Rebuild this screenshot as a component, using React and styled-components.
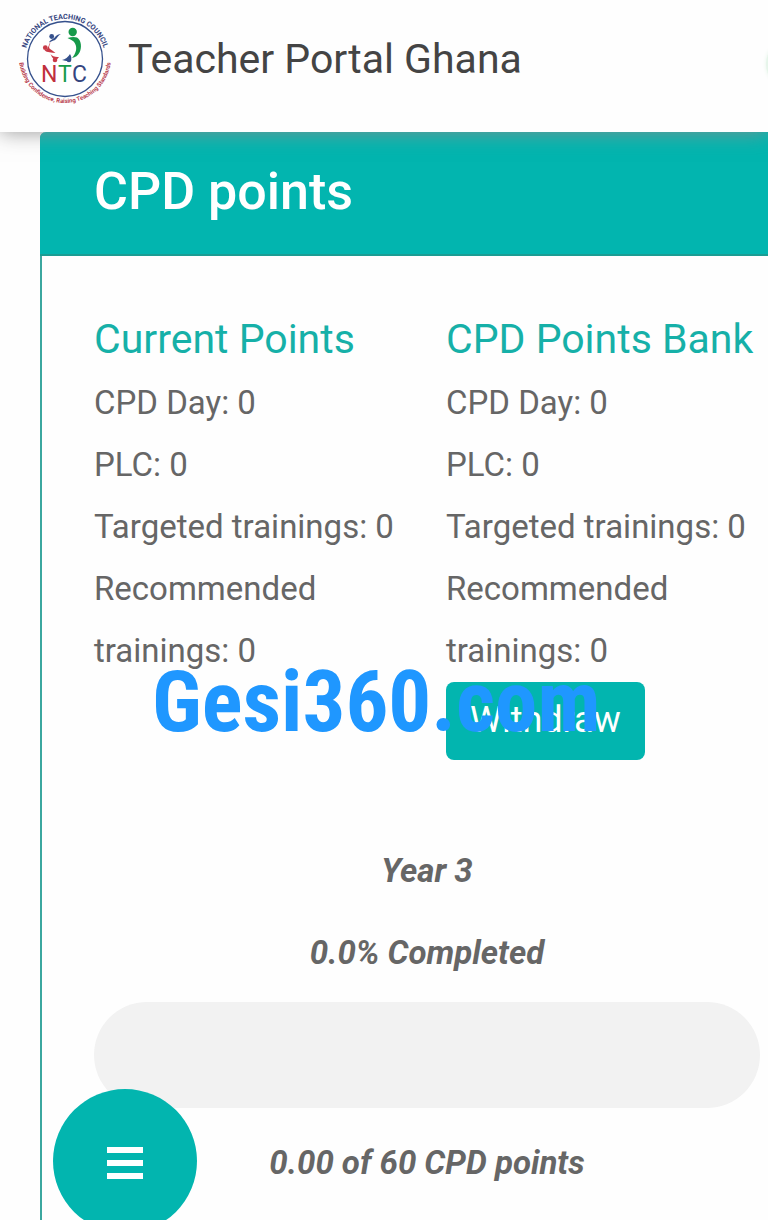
import React from "react"
import styled, { createGlobalStyle } from "styled-components"

const GlobalStyle = createGlobalStyle`
  * {
    box-sizing: border-box;
  }

  html, body {
    margin: 0;
    background: #fefefe;
  }

  body {
    font-family: Roboto, "Liberation Sans", sans-serif;
    color: #666666;
  }

  h1, h2, h3, p, ul {
    margin: 0;
    padding: 0;
    font-weight: 400;
  }
`

const pointTypes = [
  { name: "CPD Day", points: 0 },
  { name: "PLC", points: 0 },
  { name: "Targeted trainings", points: 0 },
  { name: "Recommended trainings", points: 0 },
]

const Logo = () => (
  <LogoSvg viewBox="0 0 96 96" role="img" aria-label="National Teaching Council">
    <defs>
      <path id="arc-top" d="M 8 48 A 40 40 0 0 1 88 48" />
      <path id="arc-bottom" d="M 2 46 A 46 46 0 0 0 94 46" />
    </defs>
    <circle cx="48" cy="48" r="37.5" fill="#fff" stroke="#35508c" strokeWidth="1.3" />
    <text fontSize="7.2" fontWeight="700" fill="#35457f">
      <textPath href="#arc-top" startOffset="50%" textAnchor="middle">NATIONAL TEACHING COUNCIL</textPath>
    </text>
    <text fontSize="6" fontWeight="700" fill="#b8404f">
      <textPath href="#arc-bottom" startOffset="50%" textAnchor="middle">Building Confidence, Raising Teaching Standards</textPath>
    </text>
    <circle cx="55.700" cy="21" r="4.200" fill="#169a4a" />
    <path d="M50.500 27 C54 26 57 25.500 60 26.500 C64.500 29 65 37 62.500 41.500 C61 44.500 58.500 46.500 55 47 C59 42.500 60.500 37 58 32.500 C57 30 54 28.500 50.500 27 Z" fill="#169a4a" />
    <circle cx="34.700" cy="25.500" r="2.400" fill="#35508c" />
    <path d="M32 31.500 C33 28.500 37 28 38 26 C39.500 24 42 23 44 23 C40 25 40 29 36.500 29.500 Z" fill="#35508c" />
    <circle cx="28.300" cy="36.700" r="2.400" fill="#c83a47" />
    <path d="M33.500 31 C33 34 31.500 35 32.500 37.500 C34 39 36.500 40 38.500 42 C34.500 41.500 30 41.500 27.500 39.500 C31 39 31.500 34 33.500 31 Z" fill="#c83a47" />
    <circle cx="38" cy="49" r="2.300" fill="#c83a47" />
    <path d="M33.500 43 Q36 46.500 42 46 Q40 49.500 37 48.500 Q35 47 33.500 43 Z" fill="#c83a47" />
    <circle cx="52" cy="49" r="2.300" fill="#35508c" />
    <path d="M45 49 Q50 48 53 43 Q55.500 47 53.500 50 Q49 50.500 45 49 Z" fill="#35508c" />
    <text y="71" fontSize="23">
      <tspan x="24" fill="#c0303c">N</tspan>
      <tspan x="41" fill="#169a4a">T</tspan>
      <tspan x="55" fill="#35457f">C</tspan>
    </text>
  </LogoSvg>
)

const PointsList = ({ title, children }) => (
  <Column>
    <ColumnTitle>{title}</ColumnTitle>
    <List>
      {pointTypes.map(({ name, points }) => (
        <li key={name}>{name}: {points}</li>
      ))}
    </List>
    {children}
  </Column>
)

const App = () => (
  <>
    <GlobalStyle />
    <TopBar>
      <Logo />
      <SiteName>Teacher Portal Ghana</SiteName>
      <AvatarEdge />
    </TopBar>
    <Card>
      <CardHeader>
        <CardTitle>CPD points</CardTitle>
      </CardHeader>
      <CardBody>
        <Columns>
          <PointsList title="Current Points" />
          <PointsList title="CPD Points Bank">
            <WithdrawButton type="button">Withdraw</WithdrawButton>
          </PointsList>
          <Watermark>Gesi360.com</Watermark>
        </Columns>
        <Summary>
          <Status>Year 3</Status>
          <Status>0.0% Completed</Status>
          <Track role="progressbar" aria-label="CPD points" aria-valuemin={0} aria-valuemax={60} aria-valuenow={0} />
          <Status>0.00 of 60 CPD points</Status>
        </Summary>
      </CardBody>
    </Card>
    <MenuButton type="button" aria-label="Menu">
      <svg width="36" height="32" viewBox="0 0 36 32" fill="#fff">
        <rect width="36" height="6" />
        <rect y="13" width="36" height="6" />
        <rect y="26" width="36" height="6" />
      </svg>
    </MenuButton>
  </>
)

export default App

const TopBar = styled.header`
  position: relative;
  z-index: 1;
  display: flex;
  align-items: center;
  gap: 15px;
  height: 132px;
  padding: 0 0 14px 17px;
  overflow: hidden;
  background: #fefefe;
  box-shadow: 0 0 20px rgba(140, 140, 140, 0.9);
`

const LogoSvg = styled.svg`
  flex: none;
  width: 96px;
  height: 96px;
`

const SiteName = styled.h1`
  font-size: 41px;
  line-height: 48px;
  color: #444444;
  white-space: nowrap;
`

const AvatarEdge = styled.span`
  position: absolute;
  top: 40px;
  right: -46px;
  width: 48px;
  height: 48px;
  border-radius: 50%;
  background: #e6f5ea;
  box-shadow: 0 0 4px #e6f5ea;
`

const Card = styled.main`
  min-height: calc(100vh - 132px);
  margin-left: 40px;
  border-left: 2px solid #3ba79f;
  border-top-left-radius: 6px;
`

const CardHeader = styled.div`
  display: flex;
  align-items: center;
  height: 124px;
  margin-left: -2px;
  padding: 0 54px 2px;
  background: #02b5af;
  border-bottom: 2px solid #1b9c93;
  border-top-left-radius: 6px;
`

const CardTitle = styled.h2`
  font-size: 52px;
  line-height: 60px;
  font-weight: 500;
  color: #ffffff;
`

const CardBody = styled.div`
  padding: 52px 8px 20px 52px;
`

const Columns = styled.section`
  position: relative;
  display: grid;
  grid-template-columns: 1fr 1fr;
  column-gap: 38px;
`

const Column = styled.div`
  min-width: 0;
`

const ColumnTitle = styled.h3`
  font-size: 41px;
  line-height: 62px;
  color: #16b0a8;
  white-space: nowrap;
`

const List = styled.ul`
  padding-top: 2px;
  list-style: none;
  font-size: 33px;
  line-height: 62px;
`

const WithdrawButton = styled.button`
  display: block;
  height: 78px;
  padding: 0 24px 2px;
  border: 0;
  border-radius: 8px;
  background: #02b5af;
  color: #ffffff;
  font-family: inherit;
  font-size: 36px;
`

const Watermark = styled.span`
  position: absolute;
  left: 58px;
  bottom: 8px;
  font-family: "Roboto Condensed", Roboto, sans-serif;
  font-size: 85px;
  line-height: 100px;
  font-weight: 700;
  color: #1f97ff;
  pointer-events: none;
`

const Summary = styled.section`
  display: flex;
  flex-direction: column;
  margin-top: 70px;
`

const Status = styled.p`
  font-size: 33px;
  line-height: 82px;
  font-weight: 700;
  font-style: italic;
  text-align: center;
`

const Track = styled.div`
  height: 106px;
  margin: 8px 0 14px;
  border-radius: 53px;
  background: #f2f2f2;
`

const MenuButton = styled.button`
  position: fixed;
  left: 53px;
  bottom: -13px;
  display: flex;
  align-items: center;
  justify-content: center;
  width: 144px;
  height: 144px;
  padding: 4px 0 0;
  border: 0;
  border-radius: 50%;
  background: #02b5af;
`
